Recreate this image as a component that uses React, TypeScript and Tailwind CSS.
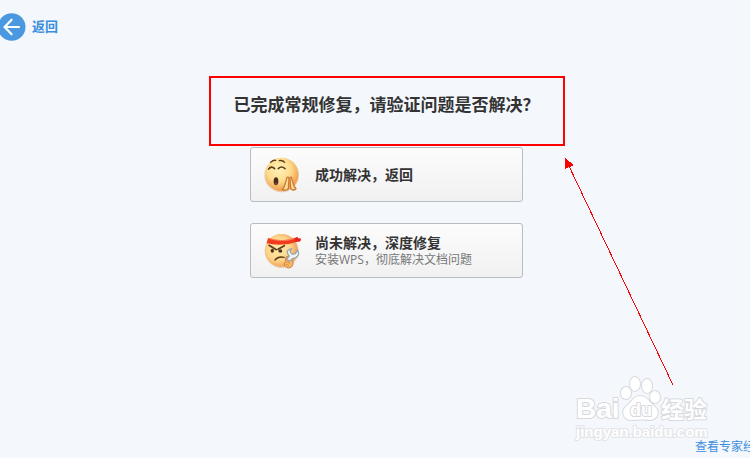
import React from "react";

function BackIcon() {
  return (
    <svg className="h-7 w-[26px] shrink-0" viewBox="0 0 26 28">
      <circle cx="11.7" cy="14" r="13.8" fill="#4a98e0" />
      <path d="M19 14H5M11.6 6.7L4.6 14l7 7.3" fill="none" stroke="#fff" strokeWidth="2.2" strokeLinecap="round" />
    </svg>
  );
}

function RelievedFace() {
  return (
    <svg className="size-10 shrink-0" viewBox="0 0 120 120">
      <defs>
        <radialGradient id="face1" cx="42%" cy="36%" r="64%">
          <stop offset="0" stopColor="#fff2b8" />
          <stop offset="0.55" stopColor="#fddc8f" />
          <stop offset="1" stopColor="#f09c4a" />
        </radialGradient>
      </defs>
      <ellipse cx="59" cy="61" rx="52" ry="51" fill="#e0a878" opacity="0.5" />
      <circle cx="59" cy="58" r="50" fill="url(#face1)" />
      <g fill="none" stroke="#5b3f1c" strokeWidth="4" strokeLinecap="round">
        <path d="M26 22Q32 15 41 16M52 17Q62 15 68 22" />
        <path d="M20 42Q28 31 38 41M49 41Q58 31 69 41" strokeWidth="5" />
      </g>
      <ellipse cx="42" cy="79" rx="7" ry="12" fill="#4a2d1c" />
      <path d="M41 82Q46 86 44 90Q38 90 41 82z" fill="#a1574b" />
      <g fill="#ffdf95" stroke="#cc7a35" strokeWidth="4" strokeLinejoin="round">
        <path d="M75 67Q80 64 81 72L79 101Q71 109 61 103Q67 98 69 88z" />
        <path d="M88 67Q83 64 84 72L86 101Q93 109 102 101Q96 97 94 87z" />
      </g>
    </svg>
  );
}

function RepairFace() {
  return (
    <svg className="size-10 shrink-0" viewBox="0 0 120 120">
      <defs>
        <radialGradient id="face2" cx="42%" cy="45%" r="60%">
          <stop offset="0" stopColor="#ffe9a6" />
          <stop offset="0.6" stopColor="#fdd68c" />
          <stop offset="1" stopColor="#ee994e" />
        </radialGradient>
      </defs>
      <circle cx="59" cy="60" r="51" fill="#e0a878" opacity="0.5" />
      <circle cx="58" cy="58" r="49" fill="url(#face2)" />
      <path d="M18 21Q58 35 100 20L106 32Q60 48 14 37z" fill="#f23b1d" />
      <path d="M20 22Q58 35 98 23" stroke="#ff7a57" strokeWidth="3" fill="none" />
      <path d="M97 25Q104 13 109 22Q120 21 116 29Q110 35 99 31z" fill="#e8231b" />
      <g fill="none" stroke="#5a3b1c" strokeLinecap="round">
        <path d="M21 43L43 56M48 55L67 44" strokeWidth="5" />
        <path d="M39 87Q49 75 66 79" strokeWidth="4" />
      </g>
      <ellipse cx="31" cy="59" rx="5" ry="6" fill="#4c321a" />
      <ellipse cx="55" cy="60" rx="6" ry="5" fill="#4c321a" />
      <path d="M74 76Q67 82 72 91L67 98Q67 109 80 111Q92 109 93 100Q95 88 85 82z" fill="#f8ba68" stroke="#cf7d3c" strokeWidth="3" />
      <path
        d="M76 60Q82 53 89 53L84 62L91 70L100 68L106 57Q112 65 108 74Q102 83 93 82L82 91L74 84L82 75Q75 69 76 60z"
        fill="#f1f4f6"
        stroke="#9aa5ac"
        strokeWidth="4"
        strokeLinejoin="round"
      />
      <path d="M73 92L84 97M71 99L81 104" stroke="#d98a45" strokeWidth="3" />
    </svg>
  );
}

function Watermark() {
  return (
    <svg className="absolute right-[34px] bottom-2 h-20 w-[142px]" viewBox="0 0 142 80" role="img" aria-label="Baidu">
      <g fill="#fff" stroke="#d7d9dd" strokeWidth="2" paintOrder="stroke" strokeLinejoin="round">
        <ellipse cx="52" cy="23" rx="5" ry="6" />
        <ellipse cx="61" cy="14" rx="5" ry="7" />
        <ellipse cx="73" cy="16" rx="5" ry="7" />
        <ellipse cx="81" cy="27" rx="5" ry="6" />
        <path d="M66 26C60 26 58 31 54 35C46 40 49 50 57 50C63 50 69 49 75 50C84 50 87 41 80 36C75 32 73 26 66 26z" />
        <text x="2" y="48" fontSize="28" fontWeight="700">Bai</text>
        <text x="56" y="46" fontSize="18" fontWeight="700">du</text>
        <text x="87" y="48" fontSize="23" fontWeight="700">经验</text>
        <text x="2" y="67" fontSize="15" fontWeight="700" stroke="#e2e4e8">jingyan.baidu.com</text>
      </g>
    </svg>
  );
}

const choices = [
  { title: "成功解决，返回", desc: "", icon: <RelievedFace /> },
  { title: "尚未解决，深度修复", desc: "安装WPS，彻底解决文档问题", icon: <RepairFace /> },
];

export default function App() {
  return (
    <div className="relative flex min-h-screen flex-col overflow-hidden bg-[#f4f7fc] font-['Liberation_Sans','Noto_Sans_CJK_SC',sans-serif] text-[#333]">
      <header className="flex pt-[13px]">
        <button type="button" className="flex items-center gap-1.5 text-[13px] font-bold text-[#3b8ede]">
          <BackIcon />
          返回
        </button>
      </header>

      <main className="relative flex flex-col items-center pt-[35px] pl-[23px]">
        <h1 className="mb-px h-[70px] w-[356px] border-2 border-[#ff0000] pt-4 text-center text-[17px] leading-6 font-bold">
          已完成常规修复，请验证问题是否解决？
        </h1>
        <div className="flex w-[273px] flex-col gap-[21px]">
          {choices.map((c) => (
            <button
              key={c.title}
              type="button"
              className="flex h-[55px] items-center gap-[13px] rounded-[3px] border border-[#b9bcc2] bg-linear-to-b from-[#fcfcfc] to-[#f1f1f1] pl-[11px] text-left"
            >
              {c.icon}
              <span className="flex flex-col">
                <span className="text-sm leading-[18px] font-bold">{c.title}</span>
                {c.desc && (
                  <span className="font-['Open_Sans','Noto_Sans_CJK_SC',sans-serif] text-xs leading-4 text-[#777]">{c.desc}</span>
                )}
              </span>
            </button>
          ))}
        </div>
        <svg className="absolute top-[117px] left-1/2 ml-[190px] h-[230px] w-[110px]" viewBox="0 0 110 230" shapeRendering="crispEdges">
          <path d="M3 6L108 227" stroke="#ff0000" strokeWidth="1" />
          <path d="M0 0L9 7L0 11z" fill="#ff0000" />
        </svg>
      </main>

      <Watermark />

      <footer className="mt-auto flex justify-end pb-[3px]">
        <a href="#" className="w-[55px] text-xs leading-4 whitespace-nowrap text-[#3b8ede]">
          查看专家经
        </a>
      </footer>
    </div>
  );
}
